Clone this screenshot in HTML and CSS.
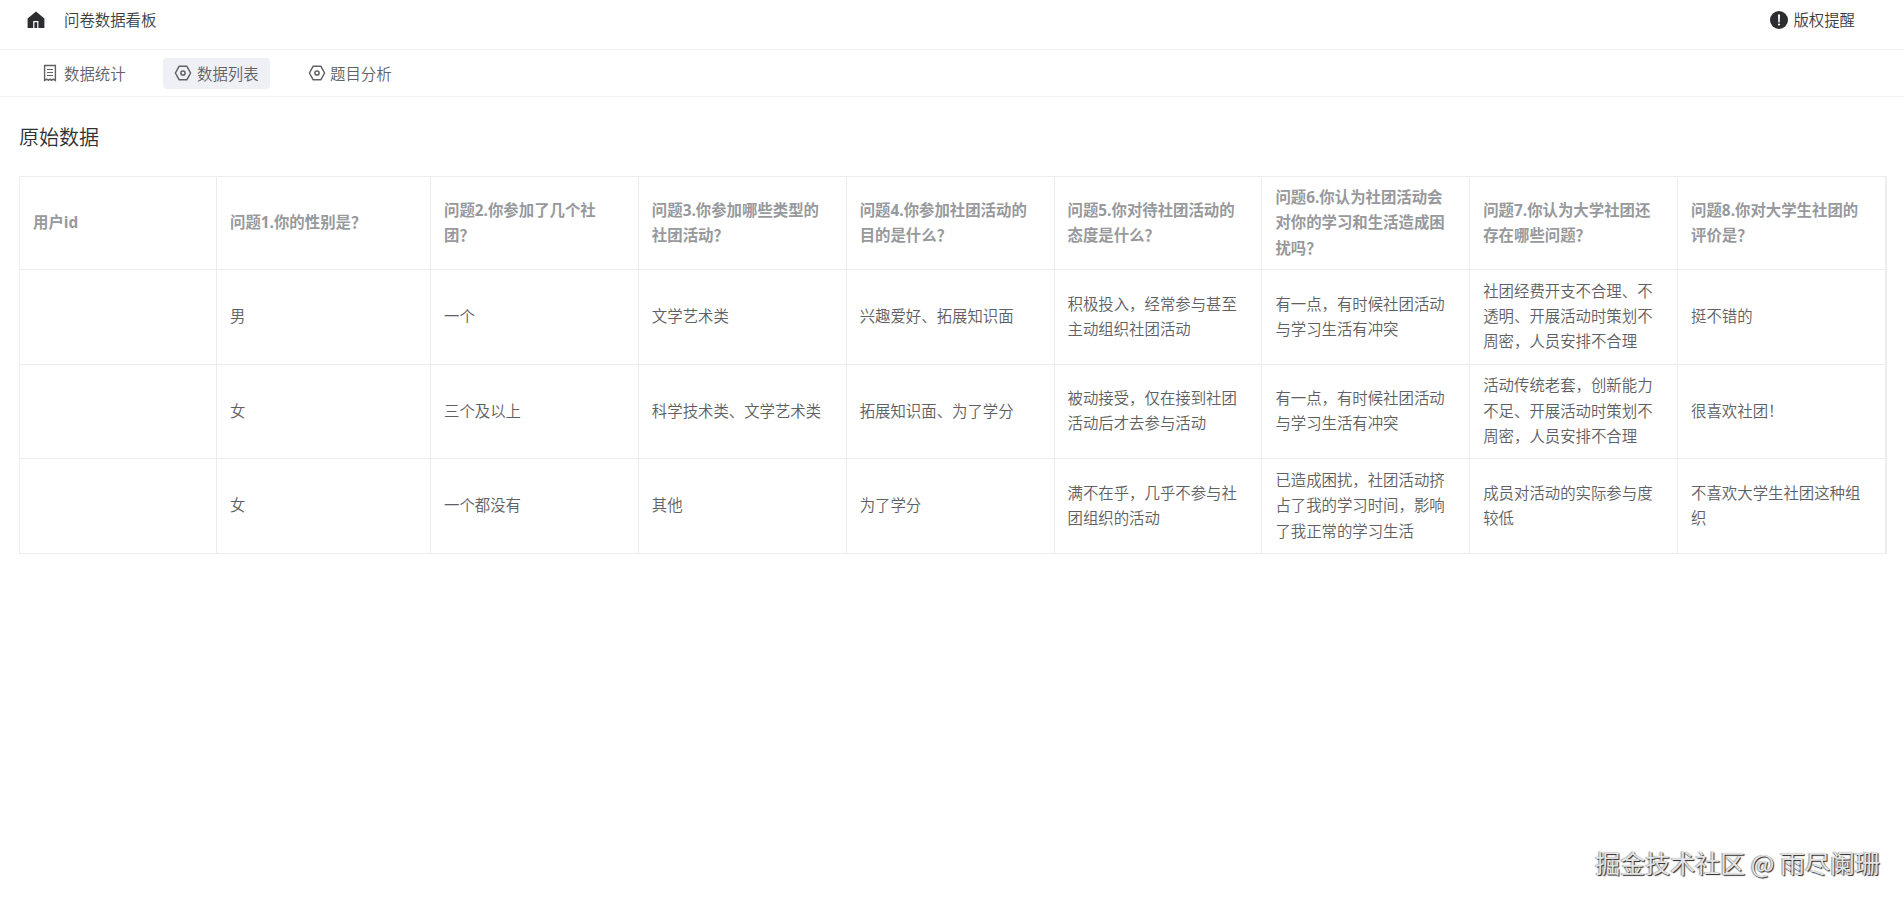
FILE: index.html
```html
<!DOCTYPE html>
<html lang="zh-CN">

<head>
    <meta charset="UTF-8">
    <meta name="viewport" content="width=device-width, initial-scale=1.0">
    <title>问卷数据看板</title>
    <link rel="stylesheet" href="styles.css">
</head>

<body>
    <header class="header">
        <div class="brand">
            <svg class="icon-home" viewBox="0 0 18 18">
                <path fill="currentColor" d="M9 .6 17.4 7.4V17H.6V7.4z"></path>
                <path fill="none" stroke="#fff" stroke-width="1.2" d="M6.8 17v-6.4h4V17"></path>
            </svg>
            <span>问卷数据看板</span>
        </div>
        <div class="notice">
            <svg class="icon-warning" viewBox="0 0 18 18">
                <circle cx="9" cy="9" r="9" fill="currentColor"></circle>
                <path fill="#fff" d="M8 3.6h2l-.3 7.8H8.3z"></path>
                <circle cx="9" cy="13.5" r="1.1" fill="#fff"></circle>
            </svg>
            <span>版权提醒</span>
        </div>
    </header>

    <nav class="tabs">
        <a class="tab">
            <svg class="icon-tab" viewBox="0 0 18 18">
                <path fill="none" stroke="currentColor" stroke-width="1.4" d="M3.6 1.5h10.8v15l-2.2-1.4-1.6 1.2L9 15.1l-1.6 1.2-1.6-1.2-2.2 1.4z"></path>
                <path fill="none" stroke="currentColor" stroke-width="1.2" d="M6 5.5h6M6 8.5h6M6 11.5h6"></path>
            </svg>
            <span>数据统计</span>
        </a>
        <a class="tab active">
            <svg class="icon-tab" viewBox="0 0 18 18">
                <path fill="none" stroke="currentColor" stroke-width="1.5" stroke-linejoin="round" d="M5.2 2.2h7.6L16.6 9l-3.8 6.8H5.2L1.4 9z"></path>
                <circle cx="9" cy="9" r="2.1" fill="none" stroke="currentColor" stroke-width="1.5"></circle>
            </svg>
            <span>数据列表</span>
        </a>
        <a class="tab">
            <svg class="icon-tab" viewBox="0 0 18 18">
                <path fill="none" stroke="currentColor" stroke-width="1.5" stroke-linejoin="round" d="M5.2 2.2h7.6L16.6 9l-3.8 6.8H5.2L1.4 9z"></path>
                <circle cx="9" cy="9" r="2.1" fill="none" stroke="currentColor" stroke-width="1.5"></circle>
            </svg>
            <span>题目分析</span>
        </a>
    </nav>

    <main class="main">
        <h2 class="title">原始数据</h2>
        <table class="table">
            <colgroup>
                <col class="col-id">
                <col class="col-sex">
                <col span="7">
            </colgroup>
            <thead>
                <tr>
                    <th>用户id</th>
                    <th>问题1.你的性别是？</th>
                    <th>问题2.你参加了几个社团？</th>
                    <th>问题3.你参加哪些类型的社团活动？</th>
                    <th>问题4.你参加社团活动的目的是什么？</th>
                    <th>问题5.你对待社团活动的态度是什么？</th>
                    <th>问题6.你认为社团活动会对你的学习和生活造成困扰吗？</th>
                    <th>问题7.你认为大学社团还存在哪些问题？</th>
                    <th>问题8.你对大学生社团的评价是？</th>
                </tr>
            </thead>
            <tbody>
                <tr>
                    <td></td>
                    <td>男</td>
                    <td>一个</td>
                    <td>文学艺术类</td>
                    <td>兴趣爱好、拓展知识面</td>
                    <td>积极投入，经常参与甚至主动组织社团活动</td>
                    <td>有一点，有时候社团活动与学习生活有冲突</td>
                    <td>社团经费开支不合理、不透明、开展活动时策划不周密，人员安排不合理</td>
                    <td>挺不错的</td>
                </tr>
                <tr>
                    <td></td>
                    <td>女</td>
                    <td>三个及以上</td>
                    <td>科学技术类、文学艺术类</td>
                    <td>拓展知识面、为了学分</td>
                    <td>被动接受，仅在接到社团活动后才去参与活动</td>
                    <td>有一点，有时候社团活动与学习生活有冲突</td>
                    <td>活动传统老套，创新能力不足、开展活动时策划不周密，人员安排不合理</td>
                    <td>很喜欢社团！</td>
                </tr>
                <tr>
                    <td></td>
                    <td>女</td>
                    <td>一个都没有</td>
                    <td>其他</td>
                    <td>为了学分</td>
                    <td>满不在乎，几乎不参与社团组织的活动</td>
                    <td>已造成困扰，社团活动挤占了我的学习时间，影响了我正常的学习生活</td>
                    <td>成员对活动的实际参与度较低</td>
                    <td>不喜欢大学生社团这种组织</td>
                </tr>
            </tbody>
        </table>
    </main>

    <div class="watermark">掘金技术社区 @ 雨尽阑珊</div>
</body>

</html>
```

FILE: styles.css
```css
* {
    box-sizing: border-box;
}

body {
    margin: 0;
    background-color: #fff;
    color: #3a3c3f;
    font-family: "Open Sans", "Noto Sans CJK SC", sans-serif;
    font-size: 15.4px;
    font-weight: 350;
}

.header {
    display: flex;
    justify-content: space-between;
    height: 50px;
    padding: 9px 49px 0 27px;
    border-bottom: 1px solid #f0f0f0;
    line-height: 24px;
}

.brand,
.notice {
    display: flex;
    height: 24px;
    align-items: center;
}

.brand {
    gap: 19px;
}

.notice {
    gap: 5px;
}

.icon-home,
.icon-warning {
    width: 18px;
    height: 18px;
    margin-bottom: 2px;
    color: #2b2d30;
}

.tabs {
    display: flex;
    align-items: center;
    height: 47px;
    gap: 27px;
    padding-left: 30px;
    border-bottom: 1px solid #f3f3f3;
}

.tab {
    display: flex;
    align-items: center;
    gap: 5px;
    width: 107px;
    height: 31px;
    padding-left: 11px;
    border-radius: 4px;
    color: #606266;
}

.tab:first-child {
    width: 106px;
}

.tab:last-child {
    gap: 4px;
}

.tab.active {
    background-color: #eff0f6;
}

.icon-tab {
    width: 18px;
    height: 18px;
}

.main {
    padding: 0 18px 0 19px;
}

.title {
    margin: 0;
    padding: 25px 0 22px;
    color: #303133;
    font-size: 20px;
    font-weight: 350;
    line-height: 32px;
}

.table {
    width: 1868px;
    table-layout: fixed;
    border-collapse: separate;
    border-spacing: 0;
    border-top: 1px solid #ebeef0;
    border-left: 1px solid #ebeef0;
    border-right: 1px solid #ebeef0;
    color: #5e6063;
    line-height: 25.3px;
}

.col-id {
    width: 197px;
}

.col-sex {
    width: 214px;
}

th,
td {
    height: 94.6px;
    padding: 8px 13px;
    border-right: 1px solid #ebeef0;
    border-bottom: 1px solid #ebeef0;
    text-align: left;
    vertical-align: middle;
    word-break: break-all;
}

th {
    height: 93px;
    color: #97999c;
    font-weight: 700;
}

.watermark {
    position: absolute;
    right: 24px;
    bottom: 23px;
    color: #e3e3e3;
    font-family: "Noto Sans CJK SC", sans-serif;
    font-size: 25px;
    font-weight: 400;
    line-height: 36px;
    text-shadow: 1px 1px 1px #222, -1px 0 1px #999;
}
```
